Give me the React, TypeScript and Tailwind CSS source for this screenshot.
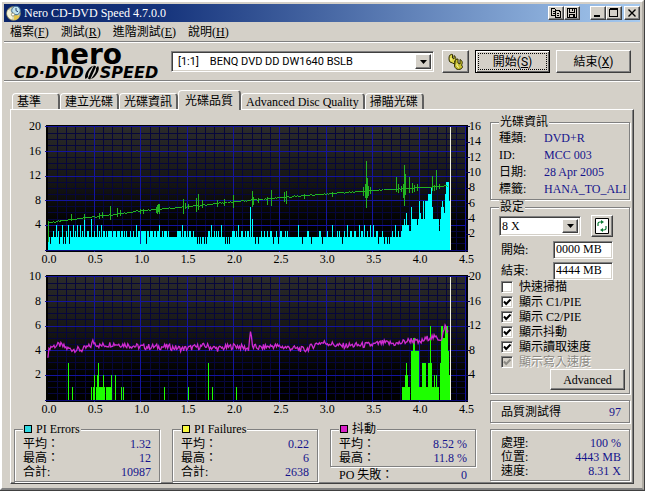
import type { ReactNode } from "react";

type Point = [number, number];
// [first x, last x, level]
type Run = [number, number, number];

const SANS = "font-['Roboto','Liberation_Sans','Noto_Sans_CJK_TC',sans-serif]";
const RAISED =
  "border border-t-white border-l-white border-b-[#404040] border-r-[#404040] bg-[#d4d0c8] shadow-[inset_-1px_-1px_0_#808080]";
const SUNKEN =
  "border border-t-[#808080] border-l-[#808080] border-b-white border-r-white bg-white shadow-[inset_1px_1px_0_#404040,inset_-1px_-1px_0_#d4d0c8]";

const MENU = [
  ["檔案", "F"],
  ["測試", "R"],
  ["進階測試", "E"],
  ["說明", "H"],
];

const TABS = ["基準", "建立光碟", "光碟資訊", "光碟品質", "Advanced Disc Quality", "掃瞄光碟"];

const DISC_INFO = [
  ["種類:", "DVD+R"],
  ["ID:", "MCC 003"],
  ["日期:", "28 Apr 2005"],
  ["標籤:", "HANA_TO_ALIC"],
];

const OPTIONS = [
  { label: "快速掃描", checked: false, disabled: false },
  { label: "顯示 C1/PIE", checked: true, disabled: false },
  { label: "顯示 C2/PIE", checked: true, disabled: false },
  { label: "顯示抖動", checked: true, disabled: false },
  { label: "顯示讀取速度", checked: true, disabled: false },
  { label: "顯示寫入速度", checked: true, disabled: true },
];

const PI_ERRORS: Run[] = [
  [0, 402, 2],
  [2, 2, 1], [5, 5, 3], [8, 8, 4], [10, 10, 3], [11, 11, 1], [14, 14, 4], [15, 15, 1], [17, 17, 1],
  [18, 18, 3], [20, 20, 4], [21, 21, 1], [22, 22, 3], [25, 25, 4], [27, 27, 3], [29, 29, 4],
  [32, 32, 4], [34, 34, 3], [36, 36, 5], [39, 40, 3], [43, 43, 5], [46, 46, 3], [49, 49, 4],
  [51, 51, 3], [53, 53, 4], [55, 56, 3], [58, 58, 3], [60, 63, 3], [65, 67, 3], [69, 71, 3],
  [73, 74, 3], [76, 76, 3], [78, 78, 3], [82, 82, 3], [85, 85, 3], [88, 88, 4], [90, 91, 3],
  [92, 92, 1], [93, 97, 3], [98, 98, 1], [99, 100, 3], [102, 104, 3], [106, 107, 3], [109, 110, 3],
  [111, 111, 4], [114, 114, 3], [116, 118, 3], [120, 120, 3], [129, 132, 3], [134, 134, 4],
  [136, 137, 3], [139, 139, 3], [141, 142, 3], [145, 145, 3], [149, 149, 1], [151, 151, 1],
  [153, 153, 1], [156, 156, 1], [158, 158, 1], [160, 161, 3], [163, 163, 4], [166, 166, 3],
  [168, 168, 3], [170, 170, 3], [173, 173, 4], [177, 177, 1], [179, 179, 1], [181, 181, 1],
  [184, 186, 3], [188, 188, 3], [190, 190, 4], [193, 194, 3], [197, 197, 3], [199, 200, 3],
  [203, 203, 7], [205, 205, 5], [208, 208, 1], [211, 211, 1], [214, 214, 3], [217, 217, 3],
  [220, 220, 3], [223, 224, 3], [226, 226, 1], [229, 229, 3], [231, 231, 1], [233, 234, 3],
  [238, 238, 3], [240, 240, 3], [251, 251, 4], [255, 255, 1], [260, 261, 3], [264, 264, 1],
  [272, 273, 3], [275, 275, 1], [280, 280, 3], [285, 285, 4], [290, 290, 3], [292, 292, 3],
  [295, 295, 1], [297, 297, 3], [300, 300, 4], [303, 304, 3], [307, 308, 3], [312, 312, 4],
  [314, 315, 3], [317, 317, 4], [320, 320, 3], [323, 323, 4], [326, 326, 4], [329, 330, 3],
  [331, 331, 1], [335, 335, 3], [337, 337, 1], [340, 340, 1], [342, 342, 1], [345, 345, 3],
  [348, 348, 4], [351, 351, 3], [354, 354, 3], [355, 356, 4], [357, 357, 5], [358, 358, 4],
  [359, 359, 6], [360, 361, 4], [362, 363, 3], [364, 364, 7], [365, 369, 5], [370, 370, 4],
  [371, 371, 5], [372, 372, 8], [373, 373, 6], [374, 375, 5], [376, 376, 8], [377, 377, 5],
  [378, 380, 8], [381, 383, 9], [384, 384, 10], [385, 385, 7], [386, 391, 5], [392, 392, 3],
  [393, 393, 5], [394, 394, 7], [395, 395, 8], [396, 396, 7], [397, 397, 6], [398, 398, 9],
  [399, 401, 11], [402, 402, 8],
];

const PI_FAILURES: Run[] = [
  [20, 20, 3], [24, 24, 1], [43, 43, 1], [45, 45, 1], [46, 46, 2], [48, 56, 1], [49, 49, 2],
  [50, 50, 3], [55, 55, 2], [58, 61, 1], [62, 62, 1], [63, 63, 2], [67, 67, 2], [73, 73, 1],
  [75, 75, 1], [116, 116, 1], [140, 140, 1], [160, 160, 3], [164, 164, 1], [188, 188, 1],
  [355, 357, 1], [358, 360, 2], [359, 359, 3], [361, 362, 1], [364, 371, 4], [366, 367, 5],
  [372, 374, 1], [375, 378, 3], [379, 380, 1], [381, 384, 3], [383, 383, 6], [385, 391, 1],
  [387, 387, 2], [389, 389, 2], [393, 393, 3], [394, 395, 6], [396, 397, 5], [398, 400, 6],
  [401, 401, 4], [402, 402, 2],
];

// Heights above the plot's base line, in px
const SPEED: Point[] = [
  [0, 27], [47, 33], [93, 39], [140, 43], [186, 48], [232, 52], [279, 56], [325, 59], [371, 62], [402, 64],
];

// [x, top, bottom]
const SPEED_SPIKES: Run[] = [
  [0, 29, 8], [23, 36, 29], [36, 36, 30], [51, 37, 31], [54, 38, 32], [62, 44, 30], [69, 42, 33],
  [72, 40, 34], [92, 41, 36], [95, 41, 36], [108, 43, 37], [109, 45, 36], [110, 46, 38],
  [111, 46, 36], [135, 51, 36], [137, 47, 41], [140, 46, 41], [148, 52, 38], [150, 56, 40],
  [154, 50, 42], [169, 50, 43], [176, 51, 44], [185, 55, 42], [205, 59, 43], [206, 53, 45],
  [211, 52, 47], [220, 53, 45], [224, 60, 44], [237, 58, 48], [239, 59, 46], [257, 56, 51],
  [285, 58, 53], [316, 63, 54], [318, 66, 52], [319, 89, 42], [320, 72, 52], [321, 64, 54],
  [323, 63, 56], [349, 73, 58], [351, 66, 57], [354, 64, 58], [356, 66, 52], [357, 85, 44],
  [358, 76, 55], [362, 73, 57], [365, 67, 57], [367, 65, 58], [370, 66, 59], [385, 74, 59],
  [387, 65, 59], [389, 80, 60], [392, 66, 61],
];

const JITTER: Point[] = [
  [0, 45], [2, 53], [12, 55], [20, 51], [34, 50], [43, 54], [45, 58], [52, 54], [65, 56], [78, 55],
  [92, 53], [120, 53], [135, 51], [158, 54], [170, 51], [188, 54], [201, 51], [203, 69], [205, 53],
  [213, 52], [226, 54], [258, 50], [271, 57], [279, 57], [292, 54], [325, 55], [335, 57], [350, 56],
  [364, 60], [372, 57], [383, 63], [394, 61], [398, 73], [401, 68], [402, 62],
];

function wobble(x: number) {
  const n = Math.sin(x * 12.9898) * 43758.5453;
  return (n - Math.floor(n)) * 2 - 1;
}

function trace(points: Point[], noise: number) {
  const out: string[] = [];
  for (let i = 0; i < points.length - 1; i++) {
    const [x0, y0] = points[i];
    const [x1, y1] = points[i + 1];
    for (let x = x0; x < x1; x++) {
      const y = y0 + ((y1 - y0) * (x - x0)) / (x1 - x0) + wobble(x) * noise;
      out.push(`${x},${(-y).toFixed(1)}`);
    }
  }
  return out.join(" ");
}

function levels(runs: Run[]) {
  const out: number[] = new Array(403).fill(0);
  for (const [from, to, level] of runs) out.fill(level, from, to + 1);
  return out;
}

interface ChartProps {
  title: string;
  left: number[];
  right: number[];
  rightMax: number;
  leftMax: number;
  bars: Run[];
  barColor: string;
  children: ReactNode;
}

function Chart({ title, left, right, rightMax, leftMax, bars, barColor, children }: ChartProps) {
  const plot = 123;
  return (
    <svg
      viewBox="0 0 471 150"
      role="img"
      aria-label={title}
      className="block w-full font-['Liberation_Serif',serif] text-[12px]"
    >
      <defs>
        <linearGradient id={`bg-${leftMax}`} x1="0" y1="0" x2="0" y2="1">
          <stop offset="0" stopColor="#2b2b2b" />
          <stop offset="0.45" stopColor="#151515" />
          <stop offset="0.8" stopColor="#000" />
        </linearGradient>
      </defs>
      <g transform="translate(34 135)" shapeRendering="crispEdges">
        <rect x="-2" y="-125" width="423" height="127" fill="#000" />
        <rect x="0" y="-123" width="419" height="123" fill={`url(#bg-${leftMax})`} />
        {Array.from({ length: 19 }, (_, i) => (
          <path key={i} d={`M0 ${-(i + 1) * 6.15}H419`} stroke="#06063c" />
        ))}
        {Array.from({ length: 44 }, (_, i) => (
          <path key={i} d={`M${(i + 1) * 9.3} 0V-123`} stroke="#06063c" />
        ))}
        {Array.from({ length: 5 }, (_, i) => (
          <path key={i} d={`M-3 ${-(i + 1) * 24.6}H419`} stroke="#1414a0" />
        ))}
        {Array.from({ length: 9 }, (_, i) => (
          <path key={i} d={`M${(i + 1) * 46.5} 2V-123`} stroke="#1414a0" />
        ))}
        <path d="M-3 0.5H421" stroke="#0a0a78" />
        {right.map((v) => (
          <path key={v} d={`M419 ${(-v * plot) / rightMax}h4`} stroke="#0a0a50" />
        ))}
        {levels(bars).map((v, x) =>
          v ? (
            <rect
              key={x}
              x={x}
              y={(-v * plot) / leftMax}
              width="1"
              height={(v * plot) / leftMax}
              fill={barColor}
            />
          ) : null
        )}
        {children}
        <path d="M403.5 0V-123" stroke="#f0f0e0" />
      </g>
      <g textAnchor="end" fill="#000">
        {left.map((v) => (
          <text key={v} x="27" y={138 - (v * plot) / leftMax}>
            {v}
          </text>
        ))}
      </g>
      {right.map((v) => (
        <text key={v} x="456" y={138 - (v * plot) / rightMax}>
          {v}
        </text>
      ))}
      <g textAnchor="middle">
        {Array.from({ length: 10 }, (_, i) => (
          <text key={i} x={35 + i * 46.5} y="148">
            {(i / 2).toFixed(1)}
          </text>
        ))}
      </g>
    </svg>
  );
}

interface GroupProps {
  title?: string;
  swatch?: string;
  className?: string;
  children: ReactNode;
}

function Group({ title, swatch, className = "", children }: GroupProps) {
  return (
    <fieldset
      className={`min-w-0 border border-[#808080] px-2 shadow-[1px_1px_0_#fff,inset_1px_1px_0_#fff] ${className}`}
    >
      {title && (
        <legend className="relative flex h-3.5 items-center gap-1 bg-[#d4d0c8] px-px leading-[14px]">
          {swatch && <span className={`size-2 border border-black ${swatch}`} />}
          {title}
        </legend>
      )}
      {children}
    </fieldset>
  );
}

function Stat({ label, value }: { label: string; value: string }) {
  return (
    <div className="flex h-3.5 items-center justify-between whitespace-nowrap">
      <dt>{label}</dt>
      <dd className="text-[#14148c]">{value}</dd>
    </div>
  );
}

function DropArrow() {
  return (
    <span
      className={`pointer-events-none absolute inset-y-0.5 right-0.5 flex w-4 items-center justify-center ${RAISED}`}
    >
      <svg width="7" height="4" viewBox="0 0 7 4">
        <path d="M0 0h7L3.5 4z" />
      </svg>
    </span>
  );
}

function CaptionButton({ label, children }: { label: string; children: ReactNode }) {
  return (
    <button type="button" aria-label={label} className={`flex h-3.5 w-4 items-center justify-center ${RAISED}`}>
      <svg width="10" height="10" viewBox="0 0 10 10" fill="none" stroke="#000" shapeRendering="crispEdges">
        {children}
      </svg>
    </button>
  );
}

function TitleBar() {
  return (
    <header className="flex h-[18px] items-center bg-[linear-gradient(90deg,#0a246a_0%,#16347c_25%,#a6caf0_100%)] pl-0.5 text-white">
      <svg width="16" height="16" viewBox="0 0 16 16" className="mr-0.5">
        <circle cx="7.5" cy="8.5" r="6.8" fill="#dcd9b4" stroke="#8f8c68" />
        <path d="M2 4.5 7 8l-1 6.5A6.5 6.5 0 0 1 1.5 6z" fill="#f6f4dc" />
        <path d="M8 9l5.5 2A6 6 0 0 1 8 15z" fill="#e3c44a" />
        <circle cx="10" cy="5.5" r="4.3" fill="#bfe2ef" stroke="#3a6a96" />
        <path d="M10 3v2.7l2 1" fill="none" stroke="#24406c" />
        <circle cx="7" cy="9.5" r="1.6" fill="#fff" stroke="#77754e" strokeWidth=".7" />
      </svg>
      <h1 className="flex-1">Nero CD-DVD Speed 4.7.0.0</h1>
      <div className="flex">
        <CaptionButton label="Copy">
          <path d="M.5 .5h3l1 1v6h-4zM4.5 2.500h3.500l1 1v6h-4.500z" />
          <path d="M2 3.500h1.500M2 5.500h1.500M6 5.500h2M6 7.500h2" />
        </CaptionButton>
        <CaptionButton label="Save">
          <path d="M.5 .5h9v9h-9zM2.500 .5v4h5v-4M2.500 9.500v-3h5v3M5.500 1v2M6.500 7v2" />
        </CaptionButton>
      </div>
      <div className="ml-2.5 flex">
        <CaptionButton label="Minimize">
          <path d="M1 8h6" strokeWidth="2" />
        </CaptionButton>
        <CaptionButton label="Maximize">
          <path d="M.5 1.500h8v7h-8zM.5 .5h8" />
        </CaptionButton>
      </div>
      <div className="ml-0.5">
        <CaptionButton label="Close">
          <path d="M1.500 1.500l7 7M8.500 1.500l-7 7" strokeWidth="1.400" shapeRendering="auto" />
        </CaptionButton>
      </div>
    </header>
  );
}

function Logo() {
  return (
    <div className="flex w-[150px] flex-col items-center font-['DejaVu_Sans',sans-serif] font-bold text-black">
      <span className="text-[28px] leading-[22px]">nero</span>
      <span className="flex h-3.5 items-center text-[16px] leading-[14px] italic">
        CD·DVD
        <svg width="16" height="15" viewBox="0 0 16 15" className="shrink-0">
          <path d="M1.5 14C-.5 11 4 2 9 1L6.500 4.500C4.500 7 3.500 10 4 12zM14 1c2.500 2-1 11-7 13l2.500-3.500C11.500 8 12.500 5 12 3z" />
          <path d="M11 1 5 14" stroke="#000" strokeWidth="2.5" />
        </svg>
        SPEED
      </span>
    </div>
  );
}

function Toolbar() {
  return (
    <div className="flex h-[39px] items-center border-t border-b border-t-white border-b-[#808080] pr-[9px] pl-[7px] shadow-[0_1px_0_#fff]">
      <Logo />
      <div className={`relative ml-2.5 h-[21px] flex-1 ${SUNKEN}`}>
        <select
          aria-label="Drive"
          className={`block h-full w-full appearance-none bg-transparent pl-1.5 text-[11px] outline-none ${SANS}`}
        >
          <option>{"[1:1]\u00a0\u00a0\u00a0\u00a0BENQ DVD DD DW1640 BSLB"}</option>
        </select>
        <DropArrow />
      </div>
      <button
        type="button"
        aria-label="Options"
        className={`ml-2 flex h-[23px] w-[27px] items-center justify-center ${RAISED}`}
      >
        <svg width="18" height="18" viewBox="0 0 18 18" stroke="#2e2c00" strokeWidth="1">
          <path d="M2 5c0-3 2-4 3.500-3.500V5L7 6V2.500C9.500 4 9 7 7.500 8.500l1 3-3-1.500L3 9C2 8 2 6 2 5z" fill="#e0d848" />
          <path d="M8 9.500C8 6.500 9.500 6 11 6v4l2 1V6.500c3 1.500 2.500 4 1.500 5.500l1 1.500c0 2-2 3-4 3S8 15 7.500 13z" fill="#c8c030" />
          <path d="M4 5v2.500M10 10.500V13l2 1.500" fill="none" stroke="#fbf8a0" />
        </svg>
      </button>
      <button
        type="button"
        className={`ml-1.5 h-[23px] w-[75px] border border-black bg-[#d4d0c8] p-0.5 shadow-[inset_1px_1px_0_#fff,inset_-1px_-1px_0_#606060] ${SANS}`}
      >
        <span className="flex h-full items-center justify-center border border-dotted border-black">
          開始(<u>S</u>)
        </span>
      </button>
      <button type="button" className={`ml-1.5 h-[23px] w-[75px] ${RAISED} ${SANS}`}>
        結束(<u>X</u>)
      </button>
    </div>
  );
}

function Tabs() {
  return (
    <div role="tablist" className="flex h-[18px] items-end whitespace-nowrap pl-0.5">
      {TABS.map((tab) => {
        const active = tab === "光碟品質";
        return (
          <button
            key={tab}
            type="button"
            role="tab"
            aria-selected={active}
            className={`rounded-t-sm border-t border-r-2 border-l border-t-white border-r-[#606060] border-l-white text-left ${
              active ? "relative -mb-px h-5 bg-[#d4d0c8] px-1.5" : "h-4 px-1"
            } ${tab === "基準" ? "w-12" : ""}`}
          >
            {tab}
          </button>
        );
      })}
    </div>
  );
}

function Settings() {
  return (
    <Group title="設定" className="h-[194px]">
      <div className="mt-px flex items-center gap-2.5">
        <div className={`relative h-5 flex-1 ${SUNKEN}`}>
          <select aria-label="Speed" className="block h-full w-full appearance-none bg-transparent pl-0.5 outline-none">
            <option>8 X</option>
          </select>
          <DropArrow />
        </div>
        <button type="button" aria-label="Refresh" className={`mr-2 flex size-[22px] items-center justify-center ${RAISED}`}>
          <svg width="14" height="16" viewBox="0 0 14 16">
            <path d="M.5 .5h13v15H.5z" fill="#fff" stroke="#000" />
            <path d="M3 8V5.500Q3 4 5 4h2M11 8v2.500Q11 12 9 12H7" fill="none" stroke="#0a7a34" strokeWidth="1.200" />
            <path d="M6 2 9 4 6 6zM8 10 5 12 8 14z" fill="#0a7a34" />
          </svg>
        </button>
      </div>
      {[
        ["開始:", "0000 MB"],
        ["結束:", "4444 MB"],
      ].map(([label, value]) => (
        <label key={label} className="mt-1 flex h-[17px] items-center pl-0.5">
          <span className="flex-1">{label}</span>
          <input
            type="text"
            defaultValue={value}
            className={`mr-2 h-[18px] w-[60px] pl-0.5 outline-none ${SUNKEN}`}
          />
        </label>
      ))}
      {OPTIONS.map(({ label, checked, disabled }) => (
        <label
          key={label}
          className={`flex h-[15px] items-center gap-1.5 pl-0.5 whitespace-nowrap ${
            disabled ? "text-[#8c8a84] [text-shadow:1px_1px_0_#fff]" : ""
          }`}
        >
          <span className="relative size-3 shrink-0">
            <input
              type="checkbox"
              defaultChecked={checked}
              disabled={disabled}
              className={`peer block size-3 appearance-none ${SUNKEN} disabled:bg-[#d4d0c8]`}
            />
            <svg
              viewBox="0 0 12 12"
              className="pointer-events-none absolute inset-0 hidden fill-none stroke-current stroke-2 peer-checked:block"
            >
              <path d="M3 5.500l2.200 2.500L9.500 3.500" />
            </svg>
          </span>
          {label}
        </label>
      ))}
      <div className="flex justify-end">
        <button type="button" className={`-mr-1 h-[21px] w-[75px] ${RAISED}`}>
          Advanced
        </button>
      </div>
    </Group>
  );
}

function Sidebar() {
  return (
    <aside className="flex w-[140px] shrink-0 flex-col pt-[5px]">
      <Group title="光碟資訊" className="h-[85px]">
        <dl>
          {DISC_INFO.map(([label, value]) => (
            <div key={label} className="-mr-1.5 flex h-[17px] items-center">
              <dt className="w-[45px] shrink-0">{label}</dt>
              <dd className="min-w-0 flex-1 overflow-hidden whitespace-nowrap text-[#14148c]">{value}</dd>
            </div>
          ))}
        </dl>
      </Group>
      <Settings />
      <Group className="mt-1.5 h-[23px] pt-1">
        <dl className="pl-0.5">
          <Stat label="品質測試得" value="97" />
        </dl>
      </Group>
      <Group className="mt-1.5 h-[52px] pt-1.5">
        <dl className="pl-0.5">
          <Stat label="處理:" value="100 %" />
          <Stat label="位置:" value="4443 MB" />
          <Stat label="速度:" value="8.31 X" />
        </dl>
      </Group>
    </aside>
  );
}

function Summary() {
  return (
    <div className="mt-2 grid grid-cols-3 gap-3 pr-2">
      <Group title="PI Errors" swatch="bg-[#30d8e0]">
        <dl className="py-px">
          <Stat label="平均：" value="1.32" />
          <Stat label="最高：" value="12" />
          <Stat label="合計:" value="10987" />
        </dl>
      </Group>
      <Group title="PI Failures" swatch="bg-[#f8f840]">
        <dl className="py-px">
          <Stat label="平均：" value="0.22" />
          <Stat label="最高：" value="6" />
          <Stat label="合計:" value="2638" />
        </dl>
      </Group>
      <div>
        <Group title="抖動" swatch="bg-[#d820c8]">
          <dl className="py-px">
            <Stat label="平均：" value="8.52 %" />
            <Stat label="最高：" value="11.8 %" />
          </dl>
        </Group>
        <dl className="px-[9px] pt-px">
          <Stat label="PO 失敗：" value="0" />
        </dl>
      </div>
    </div>
  );
}

export default function App() {
  return (
    <div className="flex min-h-screen flex-col border-r border-b border-[#404040] bg-[#d4d0c8] font-['Liberation_Serif','Noto_Sans_CJK_TC',serif] text-[12px] leading-[14px] text-black">
      <div className="flex flex-1 flex-col border-2 border-t-white border-l-white border-r-[#b0aca4] border-b-[#808080] px-0.5 pt-0.5 pb-1">
        <TitleBar />
        <nav className="flex h-5 items-center gap-3 border-b border-[#808080] pl-1.5">
          {MENU.map(([label, key]) => (
            <button key={key} type="button">
              {label}(<u>{key}</u>)
            </button>
          ))}
        </nav>
        <Toolbar />
        <main className="mt-2.5 flex flex-1 flex-col px-1.5">
          <Tabs />
          <section className="flex flex-1 justify-between border border-t-white border-l-white border-r-[#404040] border-b-[#404040] pr-[3px] pl-[3px] shadow-[inset_-1px_-1px_0_#808080]">
            <div className="min-w-0 flex-1 pt-[5px] pr-1.5">
              <Chart
                title="PI Errors"
                left={[4, 8, 12, 16, 20]}
                right={[2, 4, 6, 8, 10, 12, 14, 16]}
                leftMax={20}
                rightMax={16}
                bars={PI_ERRORS}
                barColor="#00ffff"
              >
                <polyline points={trace(SPEED, 0.7)} fill="none" stroke="#22b422" />
                {SPEED_SPIKES.map(([x, top, bottom]) => (
                  <path key={x} d={`M${x + 0.5} ${-bottom}V${-top}`} stroke="#22b422" />
                ))}
              </Chart>
              <Chart
                title="PI Failures"
                left={[2, 4, 6, 8, 10]}
                right={[4, 8, 12, 16, 20]}
                leftMax={10}
                rightMax={20}
                bars={PI_FAILURES}
                barColor="#1eff00"
              >
                <polyline
                  points={trace(JITTER, 3)}
                  fill="none"
                  stroke="#d02cd0"
                  strokeWidth="1.3"
                  shapeRendering="auto"
                />
              </Chart>
              <Summary />
            </div>
            <Sidebar />
          </section>
        </main>
      </div>
    </div>
  );
}
